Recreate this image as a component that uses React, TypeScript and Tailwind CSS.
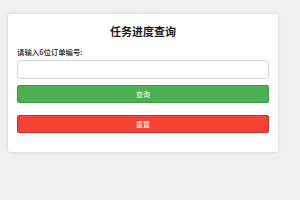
import React from "react";

export default function App() {
  const font = { fontFamily: '"Noto Sans CJK SC", "Noto Sans", sans-serif' };
  return (
    <div className="w-[300px] h-[200px] bg-[#f0f0f0] pt-[14px] pl-[8px]" style={font}>
      <div className="w-[270px] bg-white rounded-[3px] shadow-[0_0_4px_rgba(0,0,0,0.12)] pt-[10px] pb-[19px] px-[9px]">
        <h1 className="text-[11px] font-bold leading-[14px] text-center text-[#1a1a1a]">任务进度查询</h1>
        <label className="block mt-[9px] text-[7.4px] font-medium leading-[10px] text-[#222]">请输入6位订单编号:</label>
        <input className="block mt-[3px] w-full h-[19px] border border-[#d4d4d4] rounded-[3px] bg-white outline-none" />
        <button className="block mt-[6px] w-full h-[18px] bg-[#4caf50] border border-[#3c9a40] rounded-[2px] text-white text-[7px] leading-none">查询</button>
        <button className="block mt-[12px] w-full h-[18px] bg-[#f44336] border border-[#c9302c] rounded-[2px] text-white text-[7px] leading-none">重置</button>
      </div>
    </div>
  );
}
